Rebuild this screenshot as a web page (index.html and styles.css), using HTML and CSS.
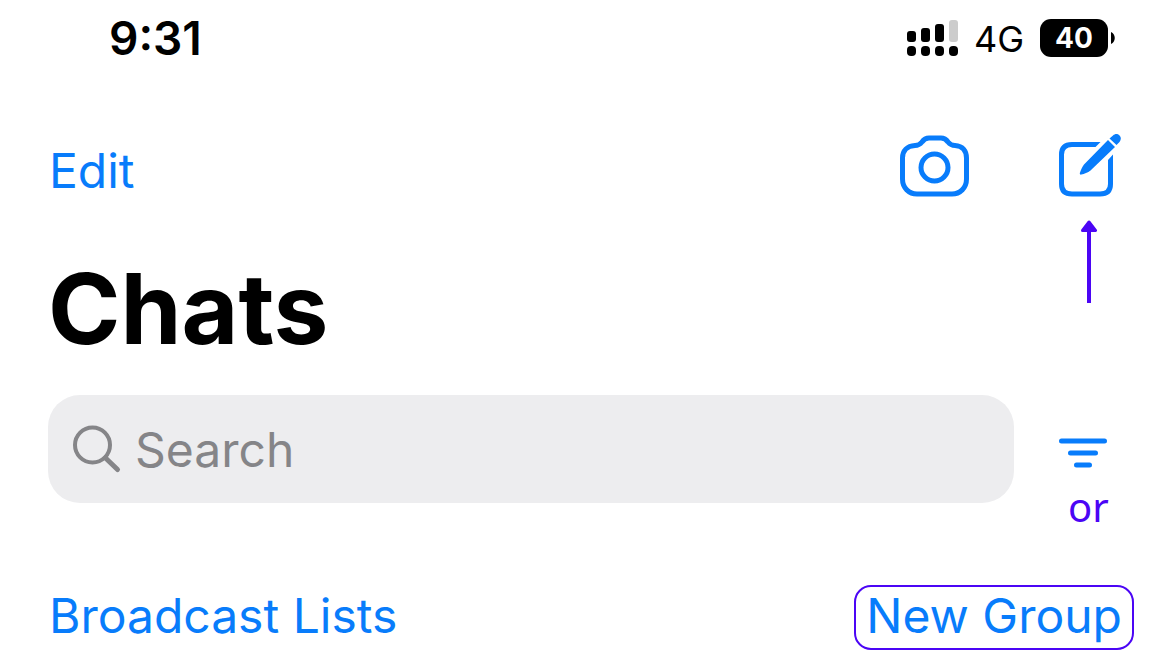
FILE: index.html
```html
<!DOCTYPE html>
<html lang="en">
<head>
<meta charset="utf-8">
<meta name="viewport" content="width=device-width, initial-scale=1">
<title>Chats</title>
<link rel="stylesheet" href="styles.css">
</head>
<body>
<div class="status-bar">
  <time class="clock">9:31</time>
  <div class="indicators">
    <svg class="signal" width="52" height="38" viewBox="0 0 52 38" aria-hidden="true">
      <rect x="1" y="12" width="9" height="11" rx="3"/>
      <rect x="15" y="9" width="9" height="14" rx="3"/>
      <rect x="29" y="5" width="9" height="18" rx="3"/>
      <rect class="signal-off" x="43" y="1" width="9" height="22" rx="3"/>
      <rect x="1" y="27" width="9" height="10" rx="4"/>
      <rect x="15" y="27" width="9" height="10" rx="4"/>
      <rect x="29" y="27" width="9" height="10" rx="4"/>
      <rect x="43" y="27" width="9" height="10" rx="4"/>
    </svg>
    <span class="network">4G</span>
    <div class="battery">
      <span class="battery-level">40</span>
      <svg width="4" height="12" viewBox="0 0 4 12" aria-hidden="true"><path d="M0 0C5 2 5 10 0 12Z"/></svg>
    </div>
  </div>
</div>

<header class="toolbar">
  <button class="text-button" type="button">Edit</button>
  <div class="actions">
    <button class="icon-button" type="button" aria-label="Camera">
      <svg width="70" height="64" viewBox="0 0 70 64" fill="none" stroke="currentColor" stroke-width="5">
        <path d="M15 11.500C18.500 11.500 20 10.500 22 8C24 5 26 4 29 4H41C44 4 46 5 48 8C50 10.500 51.500 11.500 55 11.500C63 12 66.500 17 66.500 24V45C66.500 54 60 60 52 60H17C9 60 2.500 54 2.500 45V24C2.500 17 7 12 15 11.500Z" stroke-linejoin="round"/>
        <circle cx="34.500" cy="33.500" r="13.500"/>
      </svg>
    </button>
    <button class="icon-button compose" type="button" aria-label="New chat">
      <svg width="62" height="64" viewBox="0 0 62 64" fill="none" stroke="currentColor" stroke-width="5">
        <path d="M36 10.500H13C6 10.500 2.500 14 2.500 20.500V50C2.500 56.500 6 60 13 60H41C48 60 51.500 56.500 51.500 50V26"/>
        <path d="M35.500 8H41.500L36.500 13H35.500ZM49 26.500V26L54 20.500V26.500Z" fill="currentColor" stroke="none"/>
        <path d="M49 6L56 13L31.500 36.500C29 38.500 25 40 22.500 40.500C21 41 20.500 40 21 38.500C22 36 23 33 25 30.500ZM50.500 4.500L54 1.500C56 -.5 59 -.5 60.500 1.500C62.500 3.500 62 6 60.500 8L57.500 11Z" fill="currentColor" stroke="none"/>
      </svg>
      <svg class="arrow" width="18" height="84" viewBox="0 0 18 84" aria-hidden="true">
        <path d="M7 11H11V83H7Z"/>
        <path d="M9 2L15.500 10.500H2.500Z" stroke="currentColor" stroke-width="3" stroke-linejoin="round"/>
      </svg>
    </button>
  </div>
</header>

<main>
  <h1 class="title">Chats</h1>
  <div class="search-row">
    <label class="search">
      <svg width="50" height="50" viewBox="0 0 50 50" fill="none" stroke="currentColor" aria-hidden="true">
        <circle cx="20.500" cy="21" r="17.500" stroke-width="4"/>
        <path d="M33.500 34L45.500 45.500" stroke-width="5" stroke-linecap="round"/>
      </svg>
      <input class="search-input" type="text" placeholder="Search" aria-label="Search">
    </label>
    <div class="filter">
      <button class="icon-button" type="button" aria-label="Filter">
        <svg width="48" height="32" viewBox="0 0 48 32" stroke="currentColor" stroke-width="5" stroke-linecap="round">
          <path d="M2.500 4H45.500M11.500 16H36.500M17.500 28H30.500"/>
        </svg>
      </button>
      <span class="or">or</span>
    </div>
  </div>
  <div class="list-actions">
    <button class="text-button" type="button">Broadcast Lists</button>
    <button class="text-button outlined" type="button">New Group</button>
  </div>
</main>
</body>
</html>
```
FILE: styles.css
```css
:root {
  --blue: #087cfb;
  --violet: #4b05f5;
}

* {
  box-sizing: border-box;
}

body {
  margin: 0;
  background: #fff;
  color: #000;
  font-family: Inter, "Liberation Sans", sans-serif;
}

button {
  margin: 0;
  padding: 0;
  border: 0;
  background: none;
  color: var(--blue);
  font: inherit;
  cursor: pointer;
}

svg {
  display: block;
  flex: none;
}

.status-bar {
  display: flex;
  align-items: center;
  justify-content: space-between;
  height: 76px;
  padding: 0 55px 0 109px;
}

.clock {
  font-size: 46px;
  font-weight: 600;
}

.indicators {
  display: flex;
  align-items: center;
  gap: 16px;
}

.signal-off {
  fill: #ccc;
}

.network {
  padding-top: 2px;
  font-size: 36px;
}

.battery {
  display: flex;
  align-items: center;
  gap: 3px;
}

.battery-level {
  width: 68px;
  border-radius: 11px;
  background: #000;
  color: #fff;
  font-size: 28px;
  font-weight: 700;
  line-height: 38px;
  text-align: center;
}

.toolbar {
  display: flex;
  justify-content: space-between;
  margin-top: 58px;
  padding: 0 49px;
}

.text-button {
  font-size: 48px;
  line-height: 74px;
}

.actions {
  display: flex;
  align-items: flex-start;
  gap: 89px;
}

.compose {
  position: relative;
}

.arrow {
  position: absolute;
  top: 86px;
  left: 21px;
  color: var(--violet);
  fill: currentColor;
}

.title {
  margin: 45px 48px 30px;
  font-size: 98px;
  font-weight: 700;
  line-height: 112px;
}

.search-row {
  display: flex;
  align-items: center;
  gap: 45px;
  padding: 0 63px 0 48px;
}

.search {
  display: flex;
  flex: 1;
  align-items: center;
  gap: 13px;
  height: 108px;
  padding: 0 24px;
  border-radius: 32px;
  background: #ededef;
  color: #858588;
}

.search-input {
  flex: 1;
  min-width: 0;
  padding: 0;
  border: 0;
  outline: 0;
  background: none;
  color: #000;
  font: inherit;
  font-size: 48px;
}

.search-input::placeholder {
  color: #858588;
  opacity: 1;
}

.filter {
  position: relative;
  padding-top: 8px;
}

.filter .icon-button {
  display: block;
}

.or {
  position: absolute;
  top: 50px;
  left: 9px;
  color: var(--violet);
  font-family: "Noto Sans", sans-serif;
  font-size: 40px;
  line-height: 56px;
}

.list-actions {
  display: flex;
  align-items: center;
  justify-content: space-between;
  margin-top: 82px;
  padding: 0 36px 0 49px;
}

.list-actions .text-button {
  padding-bottom: 3px;
  line-height: 58px;
}

.list-actions .outlined {
  padding: 0 10px 3px;
  border: 2px solid var(--violet);
  border-radius: 17px;
}
```
